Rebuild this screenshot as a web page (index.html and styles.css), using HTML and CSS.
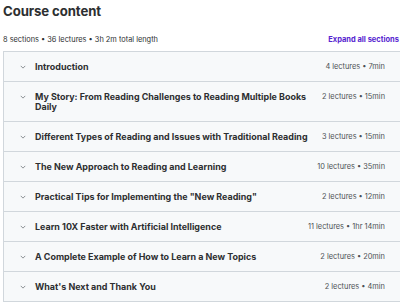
FILE: index.html
```html
<!DOCTYPE html>
<html lang="en">

<head>
    <meta charset="UTF-8">
    <meta name="viewport" content="width=device-width, initial-scale=1.0">
    <title>Course content</title>
    <link rel="stylesheet" href="styles.css">
</head>

<body>
    <div class="page">
        <h2 class="heading">Course content</h2>

        <div class="summary">
            <span>8 sections • 36 lectures • 3h 2m total length</span>
            <button class="expand">Expand all sections</button>
        </div>

        <div class="sections">
            <div class="section">
                <svg class="chevron" viewBox="0 0 8 5"><path d="M1 1l3 3 3-3"/></svg>
                <span class="section-title">Introduction</span>
                <span class="section-meta">4 lectures • 7min</span>
            </div>
            <div class="section">
                <svg class="chevron" viewBox="0 0 8 5"><path d="M1 1l3 3 3-3"/></svg>
                <span class="section-title">My Story: From Reading Challenges to Reading Multiple Books Daily</span>
                <span class="section-meta">2 lectures • 15min</span>
            </div>
            <div class="section">
                <svg class="chevron" viewBox="0 0 8 5"><path d="M1 1l3 3 3-3"/></svg>
                <span class="section-title">Different Types of Reading and Issues with Traditional Reading</span>
                <span class="section-meta">3 lectures • 15min</span>
            </div>
            <div class="section">
                <svg class="chevron" viewBox="0 0 8 5"><path d="M1 1l3 3 3-3"/></svg>
                <span class="section-title">The New Approach to Reading and Learning</span>
                <span class="section-meta">10 lectures • 35min</span>
            </div>
            <div class="section">
                <svg class="chevron" viewBox="0 0 8 5"><path d="M1 1l3 3 3-3"/></svg>
                <span class="section-title">Practical Tips for Implementing the "New Reading"</span>
                <span class="section-meta">2 lectures • 12min</span>
            </div>
            <div class="section">
                <svg class="chevron" viewBox="0 0 8 5"><path d="M1 1l3 3 3-3"/></svg>
                <span class="section-title">Learn 10X Faster with Artificial Intelligence</span>
                <span class="section-meta">11 lectures • 1hr 14min</span>
            </div>
            <div class="section">
                <svg class="chevron" viewBox="0 0 8 5"><path d="M1 1l3 3 3-3"/></svg>
                <span class="section-title">A Complete Example of How to Learn a New Topics</span>
                <span class="section-meta">2 lectures • 20min</span>
            </div>
            <div class="section">
                <svg class="chevron" viewBox="0 0 8 5"><path d="M1 1l3 3 3-3"/></svg>
                <span class="section-title">What's Next and Thank You</span>
                <span class="section-meta">2 lectures • 4min</span>
            </div>
        </div>
    </div>
</body>

</html>
```

FILE: styles.css
```css
html,
body {
    margin: 0;
    padding: 0;
    overflow: hidden;
    background: #fff;
}

body {
    font-family: Inter, "Noto Sans", sans-serif;
    color: #2d2f31;
}

.page {
    width: 404px;
    padding: 0 0 0 3px;
}

.heading {
    margin: 0;
    padding-top: 2px;
    font-size: 13.2px;
    line-height: 18px;
    font-weight: 700;
    letter-spacing: -0.1px;
}

.summary {
    display: flex;
    justify-content: space-between;
    align-items: center;
    margin-top: 13px;
    padding-right: 8px;
    height: 12px;
    font-size: 7.4px;
    color: #2d2f31;
}

.expand {
    padding: 0;
    border: none;
    background: none;
    font-family: inherit;
    font-size: 7.5px;
    font-weight: 700;
    color: #5624d0;
    cursor: pointer;
}

.sections {
    margin-top: 6px;
    border: 1px solid #d1d7dc;
    border-top: none;
}

.section {
    display: grid;
    grid-template-columns: 6px 1fr auto;
    column-gap: 9px;
    align-items: start;
    padding: 9.5px 21px 9.5px 16px;
    border-top: 1px solid #d1d7dc;
    background: #f7f9fa;
    line-height: 10px;
}

.chevron {
    width: 6px;
    height: 4px;
    margin-top: 3px;
    fill: none;
    stroke: #6a6f73;
    stroke-width: 1;
}

.section-title {
    font-size: 8.95px;
    font-weight: 700;
}

.section-meta {
    font-size: 7.4px;
    color: #4d5155;
    white-space: nowrap;
}
```
